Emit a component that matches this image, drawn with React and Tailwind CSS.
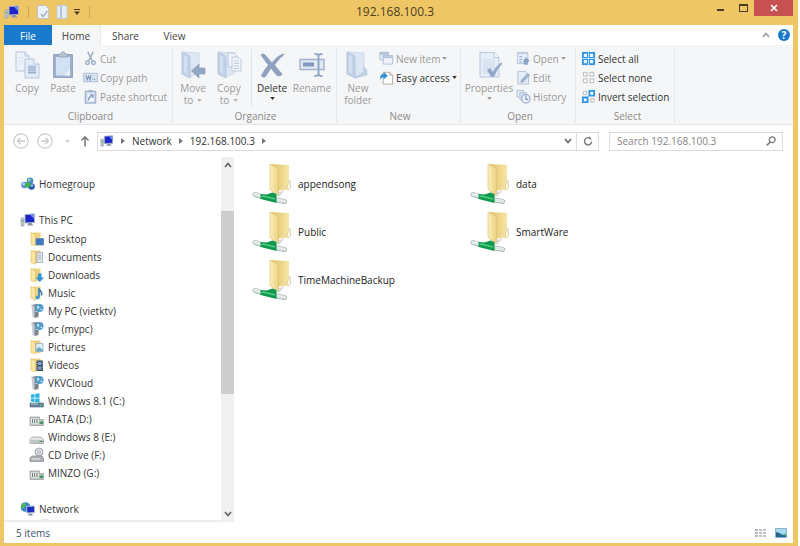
import { useState } from "react";

/* ---------- small icons ---------- */

function PcIcon({ className = "w-4 h-4" }) {
  return (
    <svg viewBox="0 0 16 16" className={className} aria-hidden="true">
      <path d="M1 6h3v8H1z" fill="#c3cad4" stroke="#8793a3" strokeWidth=".6" />
      <path d="M1.500 8h2v1.500h-2z" fill="#62b35a" />
      <path d="M5 2.500 14.500 2v8.500L5 11z" fill="#1c26c8" stroke="#aab4c8" strokeWidth="1" />
      <path d="M10 2.700l4-.2v4.500z" fill="#6f8df0" />
      <path d="M8.500 11h3l2 2.500H7z" fill="#8d98ab" />
    </svg>
  );
}

function FolderIcon({ badge }) {
  return (
    <svg viewBox="0 0 16 16" className="w-4 h-4" aria-hidden="true">
      <path d="M4 1.500h7.500v12.500H5z" fill="#ecd182" />
      <path d="M2 1.500l4.500 2V15L2 13.500z" fill="#f8e6a2" stroke="#dcb95a" strokeWidth=".6" />
      {badge === "desktop" && <path d="M7 7.500h7.500V14H7z" fill="#3b78c4" stroke="#6d86a8" strokeWidth=".8" />}
      {badge === "doc" && (
        <g>
          <path d="M8 3.500h5.500v10H8z" fill="#e4eaf4" stroke="#98a3b8" strokeWidth=".8" />
          <path d="M9.500 6h2.500M9.500 8h2.500M9.500 10h2.500" stroke="#8696b2" strokeWidth=".8" />
        </g>
      )}
      {badge === "down" && <path d="M9 6.500h3.500v4H15L10.800 15 6.500 10.500H9z" fill="#2e93d8" />}
      {badge === "music" && (
        <g>
          <path d="M10 3.500v8.500" stroke="#2680bd" strokeWidth="1.600" />
          <path d="M10 3.500c1 3 4 3 2.500 7" fill="none" stroke="#2680bd" strokeWidth="1.600" />
          <circle cx="8.500" cy="12.500" r="2" fill="#3f9fd8" />
        </g>
      )}
      {badge === "picture" && (
        <g>
          <path d="M7 4.500h7v8H7z" fill="#dff0f8" stroke="#96abc0" strokeWidth=".8" />
          <path d="M7.500 10l2.500-2 4 3v1.300H7.500z" fill="#67a9c8" />
        </g>
      )}
      {badge === "video" && (
        <g>
          <path d="M7.500 3.500h6.500v10.500H7.500z" fill="#3c4a5e" />
          <path d="M9 5h3.500v3H9zM9 9.500h3.500v3H9z" fill="#7ba4d4" />
          <path d="M8.200 4v9.500M13.400 4v9.500" stroke="#c6ced8" strokeWidth=".6" strokeDasharray="1 1" />
        </g>
      )}
    </svg>
  );
}

function ServerIcon() {
  return (
    <svg viewBox="0 0 16 16" className="w-4 h-4" aria-hidden="true">
      <path d="M2.500 2l5-1 2 1v12l-4 1z" fill="#7d868f" />
      <path d="M2.500 2l3 1v12l-2-1z" fill="#c9ced4" />
      <path d="M6.500 6.500h2M6.500 8.500h2" stroke="#dfe4e9" />
      <circle cx="10.500" cy="5" r="4" fill="#4f9bcb" />
      <path d="M8 3.500c2-2 3 1 2 2s-2 .5-2-2zM11 6c2-1.500 3 0 2 1.500z" fill="#bfe3f3" />
    </svg>
  );
}

function DriveIcon({ kind }) {
  return (
    <svg viewBox="0 0 16 16" className="w-4 h-4" aria-hidden="true">
      {kind === "windows" && (
        <g>
          <path d="M2 1.500l3.500-.5v3.700H2zM6.200.9l4.300-.6v4.400H6.200zM2 5.400h3.500V9L2 8.600zM6.200 5.400h4.300v4.300L6.200 9z" fill="#27b2e6" />
          <path d="M1 10h13.500v4H1z" fill="#63829b" stroke="#536d82" strokeWidth=".6" />
          <path d="M2 11h7" stroke="#bbd2e0" />
          <path d="M11 11.500h2.500V13H11z" fill="#58b587" />
        </g>
      )}
      {kind === "data" && (
        <g>
          <path d="M1 6h9.500v2.500h4v6H1z" fill="#c3c8c6" stroke="#8f9693" strokeWidth=".7" />
          <path d="M2 7.500h7.500v5H2z" fill="#f1f3f2" />
          <path d="M3.500 8v4M5.700 8v4M8 8v4" stroke="#6d7c76" strokeWidth="1.100" />
          <path d="M10.500 10.500h3.500v2.500h-3.500z" fill="#3f9c60" />
        </g>
      )}
      {kind === "plain" && (
        <g>
          <path d="M3 8h9l2.500 2.500v4H1v-4z" fill="#e4e6e6" stroke="#969b9b" strokeWidth=".7" />
          <path d="M1.500 11h12.500v3H1.500z" fill="#c1c5c5" />
          <path d="M10.500 11.700h3v1.300h-3z" fill="#45a05e" />
        </g>
      )}
      {kind === "cd" && (
        <g>
          <circle cx="10" cy="5" r="4" fill="#d5d8dc" stroke="#8d949d" strokeWidth=".7" />
          <circle cx="10" cy="5" r="1.200" fill="#fff" stroke="#8d949d" strokeWidth=".6" />
          <path d="M3 9h10l1.500 2v3.500H1V11z" fill="#adb1b6" stroke="#858a90" strokeWidth=".7" />
          <path d="M3 12h8" stroke="#e9ebed" />
        </g>
      )}
    </svg>
  );
}

function HomegroupIcon() {
  return (
    <svg viewBox="0 0 16 16" className="w-4 h-4" aria-hidden="true">
      <circle cx="4.500" cy="9" r="3.300" fill="#5c8cd6" />
      <circle cx="10" cy="4.800" r="3.300" fill="#4b8fc0" />
      <circle cx="11.500" cy="10.500" r="3.300" fill="#2b56b5" />
      <circle cx="7.800" cy="9" r="2.800" fill="#42b04c" />
      <circle cx="9.300" cy="4" r="1.300" fill="#a9dfb1" />
      <circle cx="3.600" cy="8" r="1.200" fill="#c3dcf8" />
      <circle cx="12" cy="9.500" r="1.200" fill="#a5c2f4" />
    </svg>
  );
}

function NetworkIcon() {
  return (
    <svg viewBox="0 0 16 16" className="w-4 h-4" aria-hidden="true">
      <circle cx="5.500" cy="6" r="4.800" fill="#3a86cd" />
      <path d="M2 3c2-2 4-1 4 1S3 6 3 8C1 7 1 4.500 2 3zM7 6c2 0 3 1 1 4H6z" fill="#58b556" />
      <path d="M6.500 5.500l8-.5v6.500l-7.500.5z" fill="#1d2cc6" stroke="#b6c1d6" strokeWidth=".9" />
      <path d="M9 12.500h3l1 2H8z" fill="#8794ad" />
    </svg>
  );
}

function ShareFolder() {
  return (
    <svg viewBox="0 0 40 44" className="w-10 h-11 shrink-0" aria-hidden="true">
      <defs>
        <linearGradient id="flap" x1="0" y1="0" x2="1" y2="0">
          <stop offset="0" stopColor="#fbf0c0" />
          <stop offset="1" stopColor="#ecd07c" />
        </linearGradient>
        <linearGradient id="back" x1="0" y1="0" x2="1" y2="0">
          <stop offset="0" stopColor="#dfc067" />
          <stop offset="1" stopColor="#f7e6a4" />
        </linearGradient>
      </defs>
      <path d="M25 31l8-3-5 6-4 1z" fill="#b5b5b5" opacity=".5" />
      <path d="M19 2l18 1v24l-12 2z" fill="url(#back)" />
      <path d="M37 18.500l1.500 1v6.500l-1.500 1.500-2 .5v-2z" fill="#fff8df" stroke="#cfc09a" strokeWidth=".7" />
      <path d="M18 2l7 3.500c1.200.7 1.500 1.500 1.500 3V31l-2 1.500-6.500-5z" fill="url(#flap)" stroke="#dbbd66" strokeWidth=".6" />
      <g fill="none" strokeLinecap="round">
        <path d="M3 32.500l6 1.800" stroke="#a9b4b6" strokeWidth="5" />
        <path d="M3 32.300l6 1.700" stroke="#e4e9ea" strokeWidth="3.500" />
        <path d="M26 38.300l6.500 1.200" stroke="#a9b4b6" strokeWidth="5" />
        <path d="M26 38.100l6.500 1.200" stroke="#e4e9ea" strokeWidth="3.500" />
      </g>
      <path d="M8.500 32l6 .5 6-2 4 1.500v9l-16-4z" fill="#10984c" />
      <path d="M9.500 34l5.500 1 8 2" fill="none" stroke="#4fcf80" strokeWidth="1.400" />
    </svg>
  );
}

/* ---------- ribbon icons ---------- */

function CopyBig() {
  return (
    <svg viewBox="0 0 28 28" className="w-7 h-7" aria-hidden="true">
      <g stroke="#b7c5da" fill="#eef3fa">
        <path d="M3 1h9l4 4v15H3z" />
        <path d="M12 1v4h4" fill="none" />
        <path d="M12 8h9l5 5v14H12z" fill="#e3ebf6" />
        <path d="M21 8v5h5" fill="#f7fafd" />
      </g>
      <path d="M5 7h6M5 10h6M5 13h5" stroke="#d3deec" />
      <path d="M15 14h8v9h-8z" fill="#bfcfe5" />
      <path d="M15 16.500h8M15 19h8M15 21.500h8" stroke="#9db1ce" />
    </svg>
  );
}

function PasteBig() {
  return (
    <svg viewBox="0 0 28 28" className="w-7 h-7" aria-hidden="true">
      <path d="M4.500 3.500h19v23h-19z" fill="#9dafcb" stroke="#94a6c2" />
      <path d="M7 6h14v18.500H7z" fill="#d3e1f4" />
      <path d="M15.500 24.500l5.500-6v6z" fill="#eef4fb" />
      <path d="M9.500 6V3h2.500c0-3 4-3 4 0h2.500v3z" fill="#b9c3d2" stroke="#92a0b6" strokeWidth=".8" />
    </svg>
  );
}

function FolderBig({ mark }) {
  return (
    <svg viewBox="0 0 28 28" className="w-7 h-7" aria-hidden="true">
      <path d="M4 1l16 1v20l-9 4z" fill="#dde7f4" stroke="#c6d4e7" strokeWidth=".8" />
      <path d="M3 1l6 3c1.200.7 2 1.500 2 3v20l-8-4z" fill="#c0d1e8" stroke="#adc0da" strokeWidth=".8" />
      <path d="M5 4l3 2v17l-3-2z" fill="#d3e0f0" />
      {mark === "move" && (
        <path d="M26 17v6h-6v4l-7.500-7 7.500-7v4z" fill="#94a8c5" stroke="#8399b9" strokeWidth=".6" />
      )}
      {mark === "copy" && (
        <g stroke="#b1c0d6" fill="#f0f4fa" strokeWidth=".8">
          <path d="M13 2h6l3 3v11h-9z" />
          <path d="M17 6h6l3 3v11h-9z" />
          <path d="M19 10h5M19 12.500h5M19 15h5M19 17.500h5" />
        </g>
      )}
      {mark === "new" && <path d="M20 16l3 3v5l-12 3 9-6z" fill="#c0d1e7" stroke="#aec1da" strokeWidth=".6" />}
    </svg>
  );
}

function DeleteBig() {
  return (
    <svg viewBox="0 0 28 28" className="w-7 h-7" aria-hidden="true">
      <path d="M3 4c2-1.500 3-1 4 0 3 3 5 6 7 8 3-4 6-7 11-9 1 0 1 .5 0 1.500-4 3-6 6-8.500 9.500 2 3 5 6 7.500 9 0 1.500-3 2.500-5 1.500-2-2-4-5-6-7.500-2 3-4 6-5.500 8.500-1 1-4 .5-4-1 2-4 4.500-7 7-10.500C8 11 6 8 3 4z" fill="#8ea1be" stroke="#8195b4" strokeWidth=".7" />
    </svg>
  );
}

function RenameBig() {
  return (
    <svg viewBox="0 0 28 28" className="w-7 h-7" aria-hidden="true">
      <path d="M2 8.500h24v10H2z" fill="#e2eaf6" stroke="#9fb3d0" strokeWidth="1.400" />
      <path d="M5 11.500h11v4H5z" fill="#8299bc" />
      <path d="M16.500 3c3 0 4 0 4 2.500v17c0 2-1 2.500-4 2.500M24.500 3c-3 0-4 0-4 2.500M24.500 25c-3 0-4-.5-4-2.500" fill="none" stroke="#91a6c5" strokeWidth="2" />
    </svg>
  );
}

function PropertiesBig() {
  return (
    <svg viewBox="0 0 28 28" className="w-7 h-7" aria-hidden="true">
      <path d="M5 1.500h14l5 5V26H5z" fill="#e5edf8" stroke="#b7c7de" />
      <path d="M19 1.500v5h5" fill="#f5f9fd" stroke="#b7c7de" />
      <path d="M8 8h12v15H8z" fill="#d8e4f3" />
      <path d="M12 19l3-2 3 4c2-4 5-7.500 8.500-9.500l1 1c-4 4-6.500 8-8.500 13.500h-3z" fill="#93a8c9" />
    </svg>
  );
}

function SmallIcon({ name }) {
  return (
    <svg viewBox="0 0 16 16" className="w-[15px] h-[15px] shrink-0" aria-hidden="true" fill="none">
      {name === "cut" && (
        <g stroke="#9badc8" strokeWidth="1.500">
          <path d="M5 1l5 9.500M11 1L6 10.500" />
          <circle cx="4.800" cy="12.500" r="1.900" />
          <circle cx="11.200" cy="12.500" r="1.900" />
        </g>
      )}
      {name === "path" && (
        <g>
          <path d="M.7 3.500h14.600v9H.7z" fill="#dae5f3" stroke="#acbdd7" />
          <path d="M3 5.500l1.500 5 1.500-4 1.500 4 1-5" stroke="#7e95b9" strokeWidth="1.200" />
          <path d="M10 10h1M12 10h1" stroke="#7e95b9" strokeWidth="1.300" />
        </g>
      )}
      {name === "shortcut" && (
        <g>
          <path d="M2.500 2.500h11v12.500h-11z" fill="#cfddef" stroke="#9fb2ce" strokeWidth="1.300" />
          <path d="M6 1h4v2H6z" fill="#9fb2ce" />
          <path d="M5 5h6.500v8H5z" fill="#f1f6fc" />
          <path d="M6 12c0-3 1-4 3-4M7.500 6.500H10.500v3" stroke="#7089b2" strokeWidth="1.300" />
        </g>
      )}
      {name === "newitem" && (
        <g stroke="#b0c0d8" fill="#e4ecf6">
          <path d="M1 1.500h9v8H1z" />
          <path d="M1 1.500h9v2H1z" fill="#b7c6dc" />
          <path d="M4.500 5h10v9h-10z" fill="#edf2f9" />
          <path d="M4.500 5h10v2h-10z" fill="#c2d0e3" />
        </g>
      )}
      {name === "easy" && (
        <g>
          <path d="M4.500 2.500h7l3 3v9.500h-10z" fill="#fff" stroke="#b3aa9a" />
          <path d="M11.500 2.500v3h3" stroke="#b3aa9a" />
          <path d="M1 10.500c0-4 1-6 4-6.500V2l4.500 4L5 10V8C3 8 2 8.500 1 10.500z" fill="#3592d8" />
        </g>
      )}
      {name === "open" && (
        <g>
          <path d="M1.500 1.500h11v12h-11z" fill="#e9f0f9" stroke="#b4c3da" />
          <path d="M1.500 1.500h11v2h-11z" fill="#c2d0e3" />
          <path d="M3.500 6h3M3.500 9h3M3.500 11.500h3" stroke="#9fb3cf" strokeWidth="1.300" />
          <path d="M8 14V11c0-2 1-3 2-3V6l4.500 4-2 2v3z" fill="#8ea4c5" />
        </g>
      )}
      {name === "edit" && (
        <g>
          <path d="M2 1.500h8l3.500 3.500v10H2z" fill="#e4ecf7" stroke="#b0c1d9" />
          <path d="M12.500 3.500l2 1.800-6.500 7.200-2.700 1 .5-2.800z" fill="#a1b5d1" stroke="#8fa5c5" strokeWidth=".6" />
        </g>
      )}
      {name === "history" && (
        <g stroke="#b0c0d7">
          <path d="M1 1.500h7v7H1z" fill="#e4ecf6" />
          <path d="M4 4h7v7H4z" fill="#d6e1f0" />
          <circle cx="10.500" cy="10.500" r="4.500" fill="#eaf0f9" stroke="#9bafcd" strokeWidth="1.300" />
          <path d="M10.500 7.500v3.500h2.500" stroke="#8299bc" strokeWidth="1.200" />
        </g>
      )}
      {name === "all" && (
        <g>
          <path d="M1 1h14v14H1z" fill="#2f95ea" />
          <path d="M3 3h3.500v3.500H3zM9.500 3H13v3.500H9.500zM3 9.500h3.500V13H3zM9.500 9.500H13V13H9.500z" fill="#e9f5ff" />
          <path d="M7.500 1h1v14h-1zM1 7.500h14v1H1z" fill="#bfe0fa" />
        </g>
      )}
      {name === "none" && (
        <g fill="#fff" stroke="#b4b4b4">
          <path d="M2.500 2.500h4v4h-4zM9.500 2.500h4v4h-4zM2.500 9.500h4v4h-4zM9.500 9.500h4v4h-4z" />
        </g>
      )}
      {name === "invert" && (
        <g>
          <path d="M2.500 2.500h3.500v3.500H2.500zM10.500 10.500H14V14h-3.500z" fill="#fff" stroke="#b4b4b4" />
          <path d="M9 2h5v5H9zM2 9h5v5H2z" fill="#fff" stroke="#2f95ea" strokeWidth="2" />
        </g>
      )}
    </svg>
  );
}

const Caret = ({ className = "" }) => (
  <svg viewBox="0 0 6 4" className={`w-[5px] h-[3px] inline-block shrink-0 ${className}`} aria-hidden="true">
    <path d="M0 0h6L3 4z" fill="currentColor" />
  </svg>
);

/* ---------- ribbon ---------- */

function Group({ label, className, children }) {
  return (
    <section className={`flex flex-col border-r border-[#e5e7e9] mt-1 mb-px ${className}`}>
      <div className="flex flex-1">{children}</div>
      <div className="text-center text-[#8b8b8b] leading-3 pb-px">{label}</div>
    </section>
  );
}

function BigButton({ icon, lines, caret, caretBelow, active, className = "w-9" }) {
  return (
    <button
      className={`flex flex-col items-center shrink-0 leading-3 ${className} ${active ? "text-[#333]" : "text-[#9a9a9a]"}`}
    >
      <span className="h-7 mt-[2px] mb-[3px] block">{icon}</span>
      {lines.map((line, i) => (
        <span key={line} className="whitespace-nowrap flex items-center gap-1">
          {line}
          {caret && i === lines.length - 1 && <Caret className="opacity-70" />}
        </span>
      ))}
      {caretBelow && <Caret className="mt-[3px]" />}
    </button>
  );
}

function SmallButton({ icon, children, caret, active }) {
  return (
    <button
      className={`flex items-center gap-[2px] h-[19px] whitespace-nowrap ${active ? "text-[#333]" : "text-[#9a9a9a]"}`}
    >
      <SmallIcon name={icon} />
      {children}
      {caret && <Caret />}
    </button>
  );
}

function Ribbon() {
  return (
    <div className="flex h-20 shrink-0 bg-[#f5f6f7] border-b border-[#e3e5e7] overflow-hidden">
      <Group label="Clipboard" className="w-[169px] pl-[5px]">
        <BigButton icon={<CopyBig />} lines={["Copy"]} />
        <BigButton icon={<PasteBig />} lines={["Paste"]} />
        <div className="flex flex-col pl-[2px]">
          <SmallButton icon="cut">Cut</SmallButton>
          <SmallButton icon="path">Copy path</SmallButton>
          <SmallButton icon="shortcut">Paste shortcut</SmallButton>
        </div>
      </Group>
      <Group label="Organize" className="w-[164px] pl-[2px]">
        <BigButton icon={<FolderBig mark="move" />} lines={["Move", "to"]} caret />
        <BigButton icon={<FolderBig mark="copy" />} lines={["Copy", "to"]} caret />
        <div className="border-l border-[#e2e4e6] ml-1 mb-1" />
        <BigButton icon={<DeleteBig />} lines={["Delete"]} caretBelow active className="w-10" />
        <BigButton icon={<RenameBig />} lines={["Rename"]} className="w-10" />
      </Group>
      <Group label="New" className="w-[124px] pl-[3px]">
        <BigButton icon={<FolderBig mark="new" />} lines={["New", "folder"]} />
        <div className="flex flex-col pl-[3px]">
          <SmallButton icon="newitem" caret>New item</SmallButton>
          <SmallButton icon="easy" caret active>Easy access</SmallButton>
        </div>
      </Group>
      <Group label="Open" className="w-[115px] pl-1">
        <BigButton icon={<PropertiesBig />} lines={["Properties"]} caretBelow className="w-12" />
        <div className="flex flex-col pl-[3px]">
          <SmallButton icon="open" caret>Open</SmallButton>
          <SmallButton icon="edit">Edit</SmallButton>
          <SmallButton icon="history">History</SmallButton>
        </div>
      </Group>
      <Group label="Select" className="w-[99px] pl-[5px]">
        <div className="flex flex-col">
          <SmallButton icon="all" active>Select all</SmallButton>
          <SmallButton icon="none" active>Select none</SmallButton>
          <SmallButton icon="invert" active>Invert selection</SmallButton>
        </div>
      </Group>
    </div>
  );
}

/* ---------- window parts ---------- */

function TitleBar() {
  return (
    <header className="flex items-start h-[25px] shrink-0">
      <div className="flex items-center gap-1 h-6">
        <PcIcon />
        <span className="w-px h-3 bg-[#c9a75a] ml-1 mr-[3px]" />
        <button aria-label="Properties">
          <svg viewBox="0 0 14 14" className="w-[14px] h-[14px]">
            <path d="M1.500.5h8l3 3v10h-11z" fill="#edf2f8" stroke="#bcc5cf" />
            <path d="M5 9l2 2.500L11.500 6" fill="none" stroke="#a4b3c7" strokeWidth="1.500" />
          </svg>
        </button>
        <button aria-label="New folder" className="ml-px">
          <svg viewBox="0 0 14 14" className="w-[14px] h-[14px]">
            <path d="M2 .5h10v13H2z" fill="#e4ecf4" stroke="#c0cbd8" />
            <path d="M6 1v12" stroke="#b4c3d4" strokeWidth="2" />
          </svg>
        </button>
        <button aria-label="Customize Quick Access Toolbar">
          <svg viewBox="0 0 8 8" className="w-2 h-2">
            <path d="M1 1.500h6" stroke="#4a3c1b" />
            <path d="M1 3.500h6l-3 3.500z" fill="#4a3c1b" />
          </svg>
        </button>
        <span className="w-px h-3 bg-[#cfa954] ml-1" />
      </div>
      <h1 className="flex-1 text-center text-[12px] leading-6 text-[#4b3e22] pr-2">192.168.100.3</h1>
      <div className="flex">
        <button aria-label="Minimize" className="w-6 h-4 flex justify-center items-end pb-[5px]">
          <span className="w-[7px] h-[2px] bg-[#4a3c1b]" />
        </button>
        <button aria-label="Maximize" className="w-[22px] h-4 flex justify-center items-center">
          <span className="w-[9px] h-2 border border-t-2 border-[#4a3c1b]" />
        </button>
        <button aria-label="Close" className="w-[39px] h-4 bg-[#c75050] flex justify-center items-center">
          <svg viewBox="0 0 8 8" className="w-2 h-2">
            <path d="M1 1l6 6M7 1L1 7" stroke="#fff" strokeWidth="1.700" />
          </svg>
        </button>
      </div>
    </header>
  );
}

function Tabs() {
  const [tab, setTab] = useState("Home");
  return (
    <nav className="flex h-5 bg-white shrink-0 text-[#444]">
      <button className="w-12 pt-px bg-[#1979ca] text-white">File</button>
      {["Home", "Share", "View"].map((name) => (
        <button
          key={name}
          onClick={() => setTab(name)}
          className={`w-[49px] pt-[2px] ${tab === name ? "bg-[#f5f6f7] border-r border-[#e5e7e9]" : ""}`}
        >
          {name}
        </button>
      ))}
      <div className="ml-auto flex items-center gap-2 pr-[3px]">
        <button aria-label="Minimize the Ribbon">
          <svg viewBox="0 0 8 6" className="w-2 h-[6px]">
            <path d="M1 5l3-3.500L7 5" fill="none" stroke="#9a9a9a" strokeWidth="1.500" />
          </svg>
        </button>
        <button
          aria-label="Help"
          className="w-3 h-3 rounded-full bg-[#1979ca] text-white font-bold leading-3 text-center"
        >
          ?
        </button>
      </div>
    </nav>
  );
}

const Crumb = () => (
  <svg viewBox="0 0 4 6" className="w-1 h-[6px]" aria-hidden="true">
    <path d="M0 0l4 3-4 3z" fill="#777" />
  </svg>
);

function AddressBar() {
  return (
    <div className="flex items-center h-8 shrink-0 bg-white pl-[9px] pr-[10px]">
      <div className="flex items-center gap-2 w-[84px] shrink-0">
        <button aria-label="Back">
          <svg viewBox="0 0 16 16" className="w-4 h-4" fill="none" stroke="#cccccc" strokeWidth="1.200">
            <circle cx="8" cy="8" r="7.200" />
            <path d="M12 8H4.500M7.500 5l-3 3 3 3" strokeWidth="1.500" />
          </svg>
        </button>
        <button aria-label="Forward">
          <svg viewBox="0 0 16 16" className="w-4 h-4" fill="none" stroke="#cccccc" strokeWidth="1.200">
            <circle cx="8" cy="8" r="7.200" />
            <path d="M4 8h7.500M8.500 5l3 3-3 3" strokeWidth="1.500" />
          </svg>
        </button>
        <button aria-label="Recent locations" className="text-[#c9c9c9] flex ml-1">
          <Caret />
        </button>
        <button aria-label="Up" className="ml-[2px]">
          <svg viewBox="0 0 10 12" className="w-[10px] h-3" fill="none" stroke="#777" strokeWidth="1.500">
            <path d="M5 11.500V2M1.500 5.500L5 1.800l3.500 3.700" />
          </svg>
        </button>
      </div>
      <div className="flex flex-1 items-stretch h-[19px] border border-[#dcdcdc] min-w-0 text-[#333]">
        <div className="flex flex-1 items-center gap-[7px] pl-[2px]">
          <PcIcon className="w-[14px] h-[14px]" />
          <Crumb />
          <a href="#network">Network</a>
          <Crumb />
          <a href="#host">192.168.100.3</a>
          <Crumb />
        </div>
        <button aria-label="Previous locations" className="w-4 flex items-center justify-center">
          <svg viewBox="0 0 8 6" className="w-2 h-[6px]">
            <path d="M1 1l3 3.500L7 1" fill="none" stroke="#666" strokeWidth="1.600" />
          </svg>
        </button>
        <button aria-label="Refresh" className="w-[22px] border-l border-[#dcdcdc] flex items-center justify-center">
          <svg viewBox="0 0 10 10" className="w-[10px] h-[10px]" fill="none" stroke="#777" strokeWidth="1.400">
            <path d="M7 2.200A3.600 3.600 0 1 0 8.700 5.500" />
            <path d="M6 .3v2.900h3z" fill="#777" stroke="none" />
          </svg>
        </button>
      </div>
      <div className="flex items-center w-[174px] h-[19px] ml-[10px] border border-[#dcdcdc] pl-[7px] pr-[6px]">
        <input
          type="text"
          aria-label="Search 192.168.100.3"
          placeholder="Search 192.168.100.3"
          className="flex-1 min-w-0 bg-transparent outline-none text-[#333] placeholder:text-[#858585]"
        />
        <button aria-label="Search">
          <svg viewBox="0 0 10 10" className="w-[10px] h-[10px]" fill="none" stroke="#777">
            <circle cx="6.200" cy="3.800" r="2.900" strokeWidth="1.300" />
            <path d="M4.200 6L.8 9.300" strokeWidth="1.700" />
          </svg>
        </button>
      </div>
    </div>
  );
}

const places = [
  { name: "Desktop", icon: <FolderIcon badge="desktop" /> },
  { name: "Documents", icon: <FolderIcon badge="doc" /> },
  { name: "Downloads", icon: <FolderIcon badge="down" /> },
  { name: "Music", icon: <FolderIcon badge="music" /> },
  { name: "My PC (vietktv)", icon: <ServerIcon /> },
  { name: "pc (mypc)", icon: <ServerIcon /> },
  { name: "Pictures", icon: <FolderIcon badge="picture" /> },
  { name: "Videos", icon: <FolderIcon badge="video" /> },
  { name: "VKVCloud", icon: <ServerIcon /> },
  { name: "Windows 8.1 (C:)", icon: <DriveIcon kind="windows" /> },
  { name: "DATA (D:)", icon: <DriveIcon kind="data" /> },
  { name: "Windows 8 (E:)", icon: <DriveIcon kind="plain" /> },
  { name: "CD Drive (F:)", icon: <DriveIcon kind="cd" /> },
  { name: "MINZO (G:)", icon: <DriveIcon kind="data" /> },
];

function TreeItem({ icon, name, nested }) {
  return (
    <a
      href={`#${name}`}
      className={`flex items-center h-[18px] whitespace-nowrap ${nested ? "pl-[25px] gap-[3px]" : "pl-4 gap-[3px]"}`}
    >
      {icon}
      {name}
    </a>
  );
}

function Sidebar() {
  return (
    <aside className="flex w-[230px] shrink-0 min-h-0">
      <div className="flex-1 overflow-hidden pt-[18px] text-[#333] border-b-2 border-[#ececec]">
        <TreeItem icon={<HomegroupIcon />} name="Homegroup" />
        <div className="mt-[18px] mb-[18px]">
          <TreeItem icon={<PcIcon />} name="This PC" />
          <div className="pt-px">
            {places.map((p) => (
              <TreeItem key={p.name} nested {...p} />
            ))}
          </div>
        </div>
        <TreeItem icon={<NetworkIcon />} name="Network" />
        <div className="pl-[30px]">
          <PcIcon />
        </div>
      </div>
      <div className="w-[13px] bg-[#f0f0f0] flex flex-col items-center shrink-0">
        <button aria-label="Scroll up" className="h-4 shrink-0">
          <svg viewBox="0 0 8 6" className="w-2 h-[6px]">
            <path d="M1 5l3-3.500L7 5" fill="none" stroke="#666" strokeWidth="1.700" />
          </svg>
        </button>
        <div className="flex flex-col flex-1 w-full">
          <div className="grow-[38]" />
          <div className="grow-[183] bg-[#cdcdcd]" />
          <div className="grow-[112]" />
        </div>
        <button aria-label="Scroll down" className="h-4 shrink-0">
          <svg viewBox="0 0 8 6" className="w-2 h-[6px]">
            <path d="M1 1l3 3.500L7 1" fill="none" stroke="#666" strokeWidth="1.700" />
          </svg>
        </button>
      </div>
    </aside>
  );
}

const shares = ["appendsong", "data", "Public", "SmartWare", "TimeMachineBackup"];

export default function App() {
  return (
    <div className="h-screen bg-white pr-[2px] font-['Open_Sans','Noto_Sans',sans-serif] text-[10px] leading-[14px] overflow-hidden">
      <div className="h-full flex flex-col bg-[#efc666] pl-1 pr-[5px] pb-[3px]">
        <TitleBar />
        <Tabs />
        <Ribbon />
        <AddressBar />
        <div className="flex flex-1 min-h-0 bg-white">
          <Sidebar />
          <main className="flex-1 pl-[18px] pt-[5px] text-[#222]">
            <ul className="grid grid-cols-[repeat(auto-fill,218px)]">
              {shares.map((name) => (
                <li key={name}>
                  <button className="flex items-center gap-[6px] h-12 pb-1">
                    <ShareFolder />
                    {name}
                  </button>
                </li>
              ))}
            </ul>
          </main>
        </div>
        <footer className="flex items-center justify-between h-[21px] shrink-0 bg-white pl-3 pr-[6px] text-[#3c4f68]">
          <span>5 items</span>
          <div className="flex items-center gap-2">
            <button aria-label="Details view">
              <svg viewBox="0 0 12 10" className="w-3 h-[10px]">
                <path d="M0 1h3v2H0zM0 4h3v2H0zM0 7h3v2H0z" fill="#b3b3bb" />
                <path d="M4 2h3M8 2h3M4 5h3M8 5h3M4 8h3M8 8h3" stroke="#85858f" />
              </svg>
            </button>
            <button aria-label="Large icons view">
              <svg viewBox="0 0 12 10" className="w-3 h-[10px]">
                <path d="M.5.5h11v9H.5z" fill="#a6dcf0" stroke="#8ab4c9" />
                <path d="M1 4l3.500 1 3 2H11v2H1z" fill="#27648f" />
                <path d="M6 7l5-1.500v2z" fill="#4eb07a" />
              </svg>
            </button>
          </div>
        </footer>
      </div>
    </div>
  );
}
